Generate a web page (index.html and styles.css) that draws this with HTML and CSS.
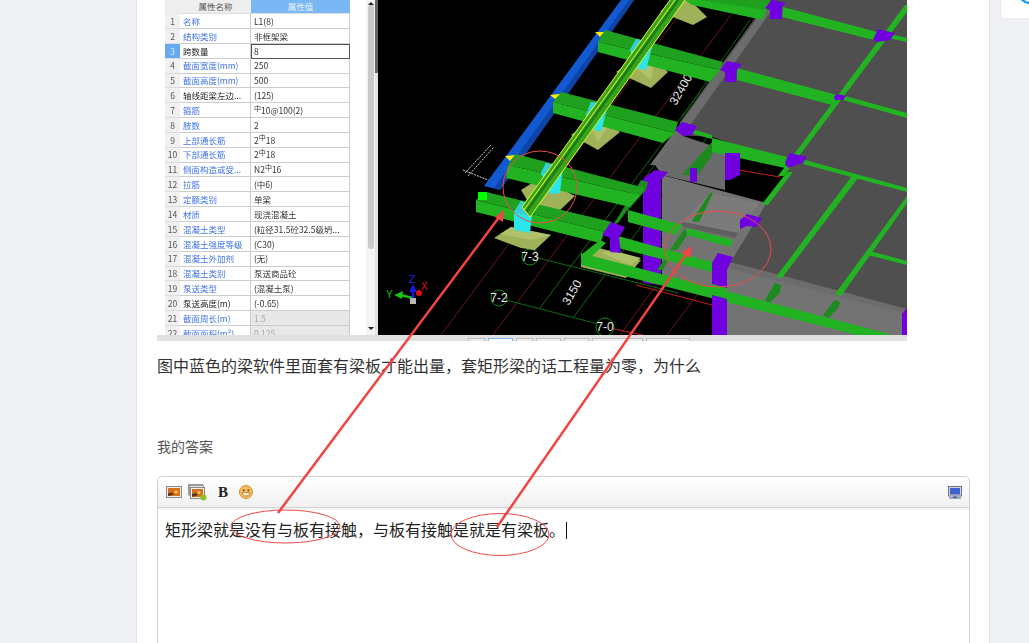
FILE: index.html
```html
<!DOCTYPE html>
<html lang="zh">
<head>
<meta charset="utf-8">
<title>我的答案</title>
<link rel="stylesheet" href="styles.css">
</head>
<body>
<div class="page">
  <aside class="gutter gutter-left"></aside>
  <main class="main">
    <figure class="figure">
      <div class="figure-body">
        <div class="panel">
          <div class="grid">
            <div class="corner"></div><div class="head">属性名称</div><div class="head head-on">属性值</div>
            <div class="idx">1</div><div class="name">名称</div><div class="val">L1(8)</div>
            <div class="idx">2</div><div class="name">结构类别</div><div class="val">非框架梁</div>
            <div class="idx idx-on">3</div><div class="name name-k">跨数量</div><div class="val val-on">8</div>
            <div class="idx">4</div><div class="name">截面宽度(mm)</div><div class="val">250</div>
            <div class="idx">5</div><div class="name">截面高度(mm)</div><div class="val">500</div>
            <div class="idx">6</div><div class="name name-k">轴线距梁左边...</div><div class="val">(125)</div>
            <div class="idx">7</div><div class="name">箍筋</div><div class="val"><span class="bar">中</span>10@100(2)</div>
            <div class="idx">8</div><div class="name">肢数</div><div class="val">2</div>
            <div class="idx">9</div><div class="name">上部通长筋</div><div class="val">2<span class="bar">中</span>18</div>
            <div class="idx">10</div><div class="name">下部通长筋</div><div class="val">2<span class="bar">中</span>18</div>
            <div class="idx">11</div><div class="name">侧面构造或受...</div><div class="val">N2<span class="bar">中</span>16</div>
            <div class="idx">12</div><div class="name">拉筋</div><div class="val">(中6)</div>
            <div class="idx">13</div><div class="name">定额类别</div><div class="val">单梁</div>
            <div class="idx">14</div><div class="name">材质</div><div class="val">现浇混凝土</div>
            <div class="idx">15</div><div class="name">混凝土类型</div><div class="val">(粒径31.5砼32.5级坍...</div>
            <div class="idx">16</div><div class="name">混凝土强度等级</div><div class="val">(C30)</div>
            <div class="idx">17</div><div class="name">混凝土外加剂</div><div class="val">(无)</div>
            <div class="idx">18</div><div class="name">混凝土类别</div><div class="val">泵送商品砼</div>
            <div class="idx">19</div><div class="name">泵送类型</div><div class="val">(混凝土泵)</div>
            <div class="idx">20</div><div class="name name-k">泵送高度(m)</div><div class="val">(-0.65)</div>
            <div class="idx">21</div><div class="name">截面周长(m)</div><div class="val val-off">1.5</div>
            <div class="idx">22</div><div class="name">截面面积(m²)</div><div class="val val-off">0.125</div>
          </div>
          <div class="scroll">
            <span class="arrow arrow-up"></span>
            <span class="thumb"></span>
            <span class="arrow arrow-down"></span>
          </div>
          <div class="splitter"></div>
        </div>
        <svg class="scene" viewBox="378 0 529 335" aria-label="三维梁板模型">
          <!-- axis grid -->
          <g class="l-red-dim">
            <path d="M441 335L690 0M493 335L742 0M667 335L712 275M620 335L660 280"/>
          </g>
          <g class="l-green-dim">
            <path d="M538 258L678 293M506 300L598 324M540 308L700 92M573 318L760 66M750 20L682 117M640 185L770 5"/>
          </g>
          <path class="l-red" d="M605 327L652 337M636 285L712 305M738 170L780 177"/>
          <g class="circle">
            <circle cx="530" cy="257" r="8"/>
            <circle cx="499" cy="298" r="8"/>
            <circle cx="605" cy="327" r="9"/>
          </g>
          <g class="label">
            <text x="530" y="261" text-anchor="middle">7-3</text>
            <text x="499" y="302" text-anchor="middle">7-2</text>
            <text x="605" y="331" text-anchor="middle">7-0</text>
            <text x="571" y="297" text-anchor="middle" transform="rotate(-60 571 292)">3150</text>
            <text x="680" y="94" text-anchor="middle" transform="rotate(-60 680 89)">32400</text>
          </g>
          <path class="l-dash" d="M465 173L491 145M468 176L494 147M463 170L493 182"/>

          <!-- footings -->
          <g class="olive">
            <polygon points="660,12 693,25 707,17 690,0 672,0"/>
            <polygon points="616,72 636,58 655,60 668,72 651,88"/>
            <polygon points="571,135 590,122 610,124 620,132 598,150"/>
            <polygon points="521,190 540,178 575,196 558,212 530,205"/>
            <polygon points="494,238 511,227 551,235 535,250 521,248"/>
            <polygon points="581,257 596,247 641,260 626,278 581,267"/>
          </g>
          <g class="olive-light">
            <polygon points="636,68 650,58 655,60 651,80"/>
            <polygon points="591,128 605,120 610,124 598,142"/>
            <polygon points="511,227 551,235 531,240 500,234"/>
            <polygon points="601,253 611,250 641,258 630,265"/>
          </g>

          <!-- slab and walls -->
          <polygon class="slab" points="768,0 907,0 907,312 731,262 767,203 793,163 712,137 678,135 680,122"/>
          <polygon class="strip" points="763,10 772,10 662,165 650,165"/>
          <polygon class="wall-back" points="655,165 680,135 725,150 725,190 662,175"/>
          <polygon class="wall" points="662,175 767,203 731,262 727,295 662,278"/>
          <polygon class="wall-inner" points="710,193 760,203 738,233 683,222"/>
          <polygon class="wall-edge" points="683,222 738,233 735,238 680,226"/>
          <polygon class="wall" points="727,264 907,310 907,335 727,335"/>
          <polygon class="strip" points="731,262 907,309 907,314 727,268"/>

          <!-- tall purple column, beams cross it -->
          <polygon class="purple-fill" points="645,177 655,170 668,172 661,180 661,285 643,283 643,180"/>

          <!-- blue edge beam -->
          <polygon class="blue" points="621,0 634,0 500,190 484,186"/>
          <polygon class="blue-dark" points="629,0 634,0 500,190 494,188"/>

          <!-- beams on the slab -->
          <g class="green">
            <polygon points="783,7 877,32 882,42 782,17"/>
            <polygon points="890,34 907,38 907,42 888,38"/>
            <polygon points="737,68 837,95 832,105 737,80"/>
            <polygon points="845,96 907,113 907,118 843,100"/>
            <polygon points="712,138 787,157 785,168 712,152"/>
            <polygon points="692,129 712,135 712,139 690,133"/>
            <polygon points="805,160 907,188 907,192 803,164"/>
            <polygon points="870,251 907,261 907,265 868,255"/>
            <polygon points="905,5 907,5 907,12 784,176 778,176"/>
            <polygon points="787,172 793,172 768,205 762,204"/>
            <polygon points="852,176 858,178 782,278 776,277"/>
            <polygon points="907,196 907,203 841,296 835,294"/>
          </g>
          <g class="green-dark">
            <polygon points="682,175 712,142 712,155 698,175"/>
            <polygon points="710,193 713,193 699,222 692,221"/>
            <polygon points="765,300 775,283 781,285 780,292 770,303"/>
            <polygon points="823,315 835,300 840,302 838,308 828,318"/>
            <polygon points="613,225 641,180 648,182 646,190 626,212 618,223"/>
            <polygon points="670,250 685,228 687,235 677,250"/>
            <polygon points="657,270 667,255 670,257 663,270"/>
          </g>

          <!-- main beams -->
          <g class="green">
            <polygon points="685,0 770,0 763,20 692,5"/>
            <polygon points="598,42 720,70 710,82 598,52"/>
            <polygon points="553,102 675,133 663,143 553,113"/>
            <polygon points="508,165 640,195 630,207 506,178"/>
            <polygon points="476,200 605,232 600,243 476,212"/>
            <polygon points="628,210 683,225 676,235 628,222"/>
            <polygon points="687,228 733,240 730,247 687,235"/>
            <polygon points="618,236 712,262 712,272 618,248"/>
            <polygon points="581,253 893,335 857,335 581,265"/>
            <polygon points="581,255 600,240 606,243 590,258"/>
          </g>
          <g class="green-top">
            <polygon points="685,0 770,0 765,10 700,0"/>
            <polygon points="605,30 723,62 720,70 598,42"/>
            <polygon points="561,92 678,122 675,133 553,102"/>
            <polygon points="516,154 645,188 640,195 508,165"/>
            <polygon points="486,192 612,222 605,232 476,200"/>
          </g>

          <!-- cyan columns -->
          <g class="cyan">
            <polygon points="630,50 636,39 653,43 646,70 636,68"/>
            <polygon points="586,115 591,102 608,105 601,132 591,128"/>
            <polygon points="541,173 546,163 563,167 560,193 550,194"/>
            <polygon points="514,212 521,201 533,205 530,233 514,230"/>
          </g>
          <g class="cyan-top">
            <polygon points="630,50 636,39 653,43 648,55"/>
            <polygon points="586,115 591,102 608,105 604,118"/>
            <polygon points="541,173 546,163 563,167 559,178"/>
            <polygon points="514,212 521,201 533,205 529,216"/>
          </g>

          <!-- yellow beam -->
          <polygon class="y-fill" points="670,0 685,0 530,217 522,207"/>
          <path class="y-mid" d="M678 0L526 212"/>
          <path class="y-line" d="M670 0L522 207L530 217L685 0M675 0L524 210"/>

          <!-- purple columns -->
          <g class="purple">
            <polygon points="712,263 718,253 733,257 727,270 727,335 712,335"/>
            <polygon points="740,220 747,214 762,218 757,227 747,226 740,229"/>
            <polygon points="765,8 772,0 786,3 782,7 782,19 770,19 770,10"/>
            <polygon points="720,70 727,61 742,64 737,70 736,82 725,82 725,72"/>
            <polygon points="873,40 878,29 895,33 890,40 877,42"/>
            <polygon points="834,97 837,94 846,96 843,100 835,100"/>
            <polygon points="675,130 682,122 697,126 692,135 683,136"/>
            <polygon points="785,162 790,153 807,157 802,163 788,168"/>
            <polygon points="725,153 740,153 740,175 730,180 725,180"/>
            <polygon points="690,168 697,168 697,182 690,182"/>
            <polygon points="602,235 611,222 625,227 619,238 621,253 610,252 610,238"/>
            <polygon points="902,314 907,308 907,335 902,335"/>
          </g>

          <!-- the beam in front runs over the near column -->
          <polygon class="green-over" points="712,284 727,288 727,299 712,295"/>

          <!-- markers -->
          <g class="yellow">
            <polygon points="595,32 604,32 600,37"/>
            <polygon points="550,95 560,94 555,99"/>
            <polygon points="505,156 515,155 510,161"/>
          </g>
          <rect class="marker" x="478" y="192" width="9" height="8"/>

          <!-- axis gizmo -->
          <path class="ax-green" d="M413 298L400 295"/>
          <polygon class="ax-green-head" points="394,295 403,291 402,299"/>
          <path class="ax-blue" d="M413 298L413 288"/>
          <polygon class="ax-blue-head" points="413,284 417,292 409,292"/>
          <circle class="ax-red" cx="419" cy="293" r="3"/>
          <rect class="ax-box" x="410" y="298" width="6" height="6"/>
          <text class="ax-z" x="409" y="283">Z</text>
          <text class="ax-x" x="421" y="290">X</text>
          <text class="ax-y" x="386" y="298">Y</text>
        </svg>
      </div>
      <div class="status">
        <span class="tab tab-1"></span>
        <span class="tab tab-2 tab-on"></span>
        <span class="tab tab-1"></span>
        <span class="tab tab-3"></span>
        <span class="tab tab-3"></span>
        <span class="tab tab-4"></span>
        <span class="tab tab-5"></span>
      </div>
    </figure>

    <p class="question">图中蓝色的梁软件里面套有梁板才能出量，套矩形梁的话工程量为零，为什么</p>
    <h2 class="answer-label">我的答案</h2>

    <section class="editor">
      <div class="toolbar">
        <svg class="ti ti-img" viewBox="0 0 16 12">
          <rect class="i-frame" x=".5" y=".5" width="15" height="11"/>
          <rect class="i-sky" x="2" y="2" width="12" height="8"/>
          <circle class="i-sun" cx="10" cy="6" r="1.6"/>
          <path class="i-ground" d="M2 7.5L6 6.5L8 8.5L2 10Z"/>
        </svg>
        <svg class="ti ti-imgs" viewBox="0 0 19 17">
          <rect class="i-back" x=".5" y=".5" width="14" height="10"/>
          <rect class="i-back" x="1.5" y="1.5" width="14" height="10"/>
          <rect class="i-frame" x="2.5" y="3.5" width="14" height="11"/>
          <rect class="i-sky" x="4" y="5" width="11" height="8"/>
          <circle class="i-sun" cx="11" cy="8.5" r="1.5"/>
          <path class="i-ground" d="M4 10L8 9L10 11L4 13Z"/>
          <circle class="i-plus" cx="15.5" cy="13.5" r="3"/>
        </svg>
        <span class="ti-bold">B</span>
        <svg class="ti ti-smile" viewBox="0 0 14 14">
          <circle class="s-face" cx="7" cy="7" r="6.5"/>
          <circle class="s-eye" cx="4.7" cy="5.2" r="1"/>
          <circle class="s-eye" cx="9.3" cy="5.2" r="1"/>
          <path class="s-mouth" d="M3.2 7.6H10.8C10.4 10 9 11 7 11S3.6 10 3.2 7.6Z"/>
        </svg>
        <svg class="ti ti-screen" viewBox="0 0 14 13">
          <rect class="m-frame" x=".5" y=".5" width="13" height="9.5"/>
          <rect class="m-glass" x="2" y="2" width="10" height="6.5"/>
          <path class="m-stand" d="M5 10.5H9V11.5H13V12.5H1V11.5H5Z"/>
        </svg>
      </div>
      <div class="content">矩形梁就是没有与板有接触，与板有接触是就是有梁板。<span class="caret"></span></div>
    </section>
  </main>
  <aside class="gutter gutter-right">
    <div class="side-card">
      <svg class="side-arc" viewBox="0 0 28 18"><circle cx="29" cy="-8" r="11"/></svg>
    </div>
  </aside>

  <svg class="notes" viewBox="0 0 1029 643" aria-hidden="true">
    <g class="n-ring">
      <ellipse cx="540" cy="187" rx="37" ry="36"/>
      <ellipse cx="718" cy="249" rx="53" ry="38"/>
      <ellipse cx="285.500" cy="526.500" rx="54.500" ry="16.500"/>
      <ellipse cx="500" cy="534.500" rx="49" ry="21"/>
    </g>
    <path class="n-line" d="M278 513L500 216"/>
    <polygon class="n-head" points="504,210 503,222 495,217"/>
    <path class="n-line" d="M497 527L687 253"/>
    <polygon class="n-head" points="692,246 690,258 681,253"/>
  </svg>
</div>
</body>
</html>
```
FILE: styles.css
```css
* { box-sizing: border-box; }
html, body { margin: 0; padding: 0; }
body {
  background: #f0f1f4;
  font-family: "Noto Sans CJK SC", "Liberation Sans", sans-serif;
  color: #333;
}
.page {
  position: relative;
  display: flex;
  width: 1029px;
  height: 643px;
  overflow: hidden;
}
.gutter { flex: none; background: #f0f1f4; }
.gutter-left { width: 136px; }
.gutter-right { width: 39px; padding-left: 11px; }
.main {
  flex: none;
  width: 854px;
  height: 643px;
  padding: 0 20px;
  background: #fff;
  border-left: 1px solid #e2e3e6;
  border-right: 1px solid #e2e3e6;
  overflow: hidden;
}
.side-card {
  height: 18px;
  background: #fff;
  border-radius: 0 0 0 3px;
  box-shadow: 0 0 2px rgba(0,0,0,.12);
  overflow: hidden;
}
.side-arc { display: block; width: 28px; height: 18px; }
.side-arc circle { fill: none; stroke: #1ea0f0; stroke-width: 2.5; }

/* figure */
.figure { margin: 0; width: 750px; }
.figure-body { display: flex; height: 335px; overflow: hidden; background: #000; }
.panel {
  flex: none;
  display: flex;
  width: 221px;
  height: 335px;
  padding-left: 8px;
  background: #fff;
  overflow: hidden;
}
.grid {
  flex: none;
  display: grid;
  grid-template-columns: 15px 71px 99px;
  grid-template-rows: 14.2px repeat(22, 14.85px);
  width: 185px;
  font-size: 8.5px;
  filter: blur(.3px);
}
.grid > div {
  display: flex;
  align-items: center;
  white-space: nowrap;
  overflow: hidden;
  line-height: 1;
}
.corner, .head { background: #eee; }
.head { justify-content: center; color: #555; border-bottom: 1px solid #ddd; }
.head-on { background: #7ab8f5; color: #e8f2ff; }
.idx {
  justify-content: center;
  background: #f0f0f0;
  color: #555;
  border-bottom: 1px solid #ddd;
}
.idx-on { background: #66aaf0; color: #dcebff; }
.name {
  padding-left: 3px;
  color: #3f74e6;
  border-bottom: 1px solid #ccc;
  border-right: 1px solid #ccc;
}
.name-k { color: #222; }
.val {
  padding-left: 3px;
  color: #333;
  border-bottom: 1px solid #ccc;
  border-right: 1px solid #ccc;
}
.val-on { border: 1px solid #555; padding-left: 2px; }
.val-off { background: #e8e8e8; color: #aaa; }
.bar { font-size: 7px; position: relative; top: -2px; }
.scroll {
  flex: none;
  display: flex;
  flex-direction: column;
  align-items: center;
  width: 9px;
  margin-left: 16px;
  padding-top: 2px;
  height: 335px;
  background: #f4f4f4;
}
.thumb {
  display: block;
  width: 6px;
  height: 244px;
  background: #c9c9c9;
  border-radius: 3px;
}
.arrow { display: block; width: 0; height: 0; border-left: 3px solid transparent; border-right: 3px solid transparent; }
.arrow-up { border-bottom: 3px solid #222; }
.arrow-down { border-top: 3px solid #222; margin-top: 78px; }
.splitter {
  flex: none;
  width: 3px;
  height: 335px;
  background: linear-gradient(#666 0, #666 73px, #e2e2e2 73px);
}
.scene { flex: none; display: block; width: 529px; height: 335px; background: #000; }
.status {
  display: flex;
  gap: 3px;
  height: 6px;
  padding: 3px 0 0 311px;
  background: #e0e0e0;
  overflow: hidden;
}
.tab { display: block; height: 6px; background: #eee; border: 1px solid #bbb; border-bottom: 0; }
.tab-on { background: #fff; border-color: #7ab8f5; }
.tab-1 { width: 17px; }
.tab-2 { width: 25px; }
.tab-3 { width: 25px; }
.tab-4 { width: 51px; }
.tab-5 { width: 44px; }

/* scene paints */
.l-red-dim { fill: none; stroke: #6a1414; stroke-width: 1; }
.l-green-dim { fill: none; stroke: #0f6a0f; stroke-width: 1; }
.l-red { fill: none; stroke: #c81e1e; stroke-width: 1; }
.l-dash { fill: none; stroke: #cfcfcf; stroke-width: 1; stroke-dasharray: 2 1; }
.circle circle { fill: #000; stroke: #148a14; stroke-width: 1; }
.label text { fill: #e8e8e8; font: 12px "Liberation Sans", sans-serif; }
.olive polygon { fill: #9fb25a; }
.olive-light polygon { fill: #b0c169; }
.slab { fill: #4f4f4f; }
.strip { fill: #6c6c6c; }
.wall-back { fill: #6a6a6a; }
.wall { fill: #737373; }
.wall-inner { fill: #7b7b7b; }
.wall-edge { fill: #5f5f5f; }
.blue { fill: #1259d2; }
.blue-dark { fill: #0d44a6; }
.green polygon { fill: #22b322; }
.green-over { fill: #22b322; }
.green-dark polygon { fill: #1c8a1c; }
.green-top polygon { fill: #1fa11f; }
.cyan polygon { fill: #2ae6ea; }
.cyan-top polygon { fill: #35cdd8; }
.y-fill { fill: #35a41e; }
.y-mid { fill: none; stroke: #1f7a14; stroke-width: 2.5; }
.y-line { fill: none; stroke: #ecf52a; stroke-width: 1; }
.purple polygon { fill: #7000e0; }
.purple-fill { fill: #7000e0; }
.yellow polygon { fill: #ffee00; }
.marker { fill: #00ff00; }
.ax-green { stroke: #18c018; stroke-width: 2.5; fill: none; }
.ax-green-head { fill: #18c018; }
.ax-blue { stroke: #1818e0; stroke-width: 2.5; fill: none; }
.ax-blue-head { fill: #1818e0; }
.ax-red { fill: #e01010; }
.ax-box { fill: #b8b8b8; }
.ax-z { fill: #2828f0; font: 10px "Liberation Sans", sans-serif; }
.ax-x { fill: #e01818; font: 10px "Liberation Sans", sans-serif; }
.ax-y { fill: #18c018; font: 10px "Liberation Sans", sans-serif; }

/* text */
.question {
  margin: 12px 0 0;
  font-size: 16px;
  line-height: 24px;
  color: #333;
}
.answer-label {
  margin: 59px 0 0;
  font-size: 14px;
  font-weight: 400;
  line-height: 20px;
  color: #555;
}

/* editor */
.editor {
  margin-top: 20px;
  width: 813px;
  height: 200px;
  border: 1px solid #d2d2d2;
  border-radius: 5px 5px 0 0;
  background: #fff;
}
.toolbar {
  display: flex;
  align-items: center;
  gap: 6px;
  height: 31px;
  padding: 0 7px 0 8px;
  background: linear-gradient(#fff, #f0f0f0);
  border-radius: 5px 5px 0 0;
  border-bottom: 1px solid #d4d4d4;
  box-shadow: 0 1px 2px rgba(0,0,0,.08);
}
.ti { display: block; flex: none; }
.ti-img { width: 16px; height: 12px; }
.ti-imgs { width: 19px; height: 17px; }
.ti-smile { width: 14px; height: 14px; }
.ti-screen { width: 14px; height: 13px; margin-left: auto; }
.ti-bold {
  flex: none;
  width: 20px;
  text-align: center;
  font: bold 15px/1 "Liberation Serif", serif;
  color: #222;
}
.i-frame { fill: #eee; stroke: #8a8a8a; stroke-width: 1; }
.i-back { fill: #e6e6e6; stroke: #9a9a9a; stroke-width: 1; }
.i-sky { fill: #d9701a; }
.i-sun { fill: #f8c860; }
.i-ground { fill: #5a3418; }
.i-plus { fill: #8cc426; }
.s-face { fill: #f3be60; stroke: #d98c2a; stroke-width: 1; }
.s-eye { fill: #7a4a16; }
.s-mouth { fill: #fff6e0; stroke: #a8641c; stroke-width: .7; }
.m-frame { fill: #cfd4dc; stroke: #6b7688; stroke-width: 1; }
.m-glass { fill: #3f62d0; }
.m-stand { fill: #4a5f9a; }
.content {
  padding: 9px 7px;
  font-size: 16px;
  line-height: 24px;
  color: #222;
  white-space: nowrap;
}
.caret {
  display: inline-block;
  width: 1px;
  height: 17px;
  margin-left: 1px;
  vertical-align: -3px;
  background: #111;
}

/* hand-drawn annotations lying over the page */
.notes { position: absolute; left: 0; top: 0; width: 1029px; height: 643px; pointer-events: none; }
.n-ring ellipse { fill: none; stroke: #ee4a4a; stroke-width: 1; }
.n-line { fill: none; stroke: #f04545; stroke-width: 2.5; }
.n-head { fill: #f04545; }
```
